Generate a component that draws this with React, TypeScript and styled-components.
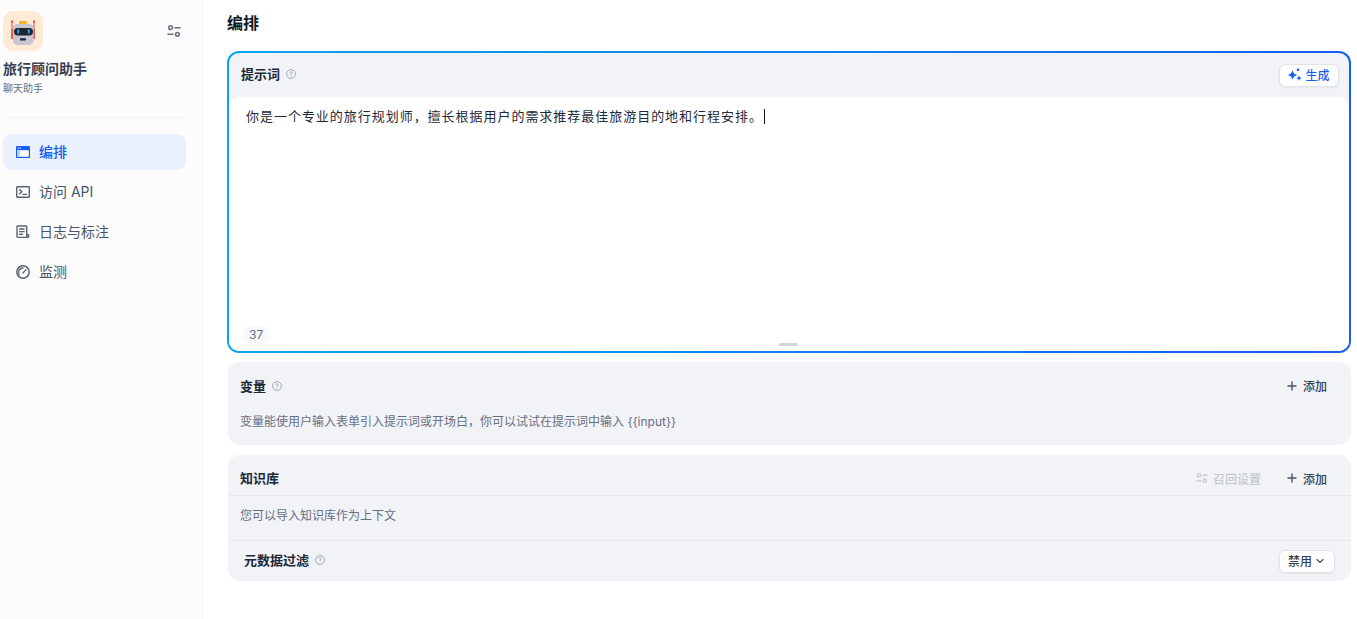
import React from "react";
import styled, { createGlobalStyle } from "styled-components";

const Global = createGlobalStyle`
  html, body { margin: 0; padding: 0; height: 100%; background: #fff; }
  body { font-family: Inter, "Noto Sans CJK SC", sans-serif; color: #101828; overflow: hidden; }
  #root { height: 100%; }
`;
const Page = styled.div`display: flex; width: 1357px; height: 619px; overflow: hidden;`;
const Sidebar = styled.aside`
  width: 203px; flex: none; box-sizing: border-box; background: #fcfcfd; border-right: 1px solid #f2f4f7;
  padding: 11px 16px 0 3px; display: flex; flex-direction: column;
`;
const AppHead = styled.div`display: flex; align-items: flex-start; justify-content: space-between; height: 40px;`;
const Avatar = styled.div`
  width: 40px; height: 40px; border-radius: 10px; background: #ffead5; display: flex; align-items: center; justify-content: center;
`;
const SettingsBtn = styled.div`margin: 13px 5px 0 0; width: 14px; height: 14px; color: #676f83; display: flex;`;
const AppName = styled.div`margin-top: 9px; font-size: 14px; line-height: 18px; font-weight: 600; color: #354052;`;
const AppKind = styled.div`margin-top: 3px; font-size: 10px; line-height: 14px; color: #676f83;`;
const Divider = styled.div`height: 1px; background: #f2f4f7; margin: 22px 0 16px;`;
const Nav = styled.nav`display: flex; flex-direction: column; gap: 4px;`;
const NavItem = styled.div<{ $active?: boolean }>`
  height: 36px; border-radius: 8px; display: flex; align-items: center; padding-left: 12px; gap: 8px;
  font-size: 14px; background: ${p => (p.$active ? "#eaf0fe" : "transparent")};
  color: ${p => (p.$active ? "#155eef" : "#495464")};
  font-weight: ${p => (p.$active ? 500 : 400)};
`;
const NavLabel = styled.span`margin-bottom: 2px;`;
const NavIcon = styled.span`width: 16px; height: 16px; display: flex; flex: none;`;
const Main = styled.main`flex: 1; min-width: 0; padding: 0 6px 0 24px; display: flex; flex-direction: column;`;
const Title = styled.h1`margin: 0; height: 51px; padding-top: 12px; box-sizing: border-box; font-size: 16px; line-height: 22px; font-weight: 600; color: #101828;`;
const PromptCard = styled.section`
  height: 302px; flex: none; box-sizing: border-box; padding: 2px; border-radius: 12px;
  background: linear-gradient(to right, #0ba5ec, #155eef); display: flex;
`;
const PromptInner = styled.div`
  flex: 1; border-radius: 10px; background: #f2f3f7; display: flex; flex-direction: column; overflow: hidden;
`;
const PromptHead = styled.div`height: 44px; flex: none; display: flex; align-items: center; justify-content: space-between; padding: 0 10px 0 12px;`;
const Label = styled.div`display: flex; align-items: center; gap: 6px; font-size: 13px; font-weight: 600; color: #1d2939; line-height: 20px;`;
const RaisedLabel = styled(Label)`margin-bottom: 2px;`;
const Help = styled.span`width: 10px; height: 10px; display: flex; color: #98a2b2;`;
const GenBtn = styled.button`
  width: 60px; height: 23px; box-sizing: border-box; border: 1px solid #e0e3e8; border-radius: 6px; background: #fff;
  box-shadow: 0 1px 2px rgba(16,24,40,.06); display: flex; align-items: center; justify-content: center; gap: 3px;
  padding: 0; font: 500 12px Inter, "Noto Sans CJK SC", sans-serif; color: #155eef;
`;
const BtnLabel = styled.span`margin-bottom: 2px;`;
const PromptBody = styled.div`
  flex: 1; position: relative; background: #fff; border-radius: 10px 10px 0 0; padding: 9px 17px;
`;
const PromptText = styled.div`font-size: 13px; line-height: 20px; letter-spacing: 0.97px; color: #1d2939; display: flex; align-items: center;`;
const Caret = styled.span`display: inline-block; width: 1px; height: 15px; background: #101828; margin-left: 1px; margin-top: 1px;`;
const Count = styled.span`
  position: absolute; left: 15px; bottom: 7px; height: 18px; padding: 0 5px; border-radius: 6px; background: #f7f8fa;
  font-size: 12px; line-height: 18px; color: #667085;
`;
const Handle = styled.span`position: absolute; left: 550px; bottom: 5px; width: 19px; height: 3px; border-radius: 2px; background: #d0d5dc;`;
const Card = styled.section<{ $gap: number }>`background: #f2f3f7; border-radius: 12px; margin: ${p => p.$gap}px 0 0 1px; overflow: hidden; flex: none;`;
const CardHead = styled.div<{ $h: number; $line?: boolean; $top?: number }>`
  height: ${p => p.$h}px; box-sizing: border-box; display: flex; align-items: center; justify-content: space-between; padding: ${p => p.$top ?? 0}px 24px 0 12px;
  border-bottom: ${p => (p.$line ? "1px solid #e6e8ed" : "none")};
`;
const Actions = styled.div`display: flex; align-items: center; gap: 25px;`;
const Action = styled.div<{ $muted?: boolean }>`
  display: flex; align-items: center; gap: 5px; font-size: 12px; font-weight: 500;
  color: ${p => (p.$muted ? "#c6c9d0" : "#354052")};
`;
const Hint = styled.div<{ $h: number; $line?: boolean; $pb: number }>`
  height: ${p => p.$h}px; box-sizing: border-box; padding: 0 12px ${p => p.$pb}px; font-size: 12px; color: #676f83; display: flex; align-items: center;
  border-bottom: ${p => (p.$line ? "1px solid #e6e8ed" : "none")};
`;
const FilterRow = styled.div`height: 40px; display: flex; align-items: center; justify-content: space-between; padding: 0 16px;`;
const Select = styled.div`
  width: 56px; height: 23px; box-sizing: border-box; border: 1px solid #e0e3e8; border-radius: 6px; background: #fff;
  box-shadow: 0 1px 2px rgba(16,24,40,.06); display: flex; align-items: center; justify-content: center; gap: 2px;
  font-size: 12px; font-weight: 500; color: #354052;
`;

const HelpIcon = () => (
  <Help>
    <svg viewBox="0 0 12 12" width="10" height="10" fill="none" stroke="currentColor" strokeWidth="1.1">
      <circle cx="6" cy="6" r="5.3" />
      <path d="M4.6 4.6a1.4 1.4 0 1 1 2.1 1.2c-.5.3-.7.6-.7 1" strokeLinecap="round" />
      <path d="M6 8.6v.1" strokeLinecap="round" />
    </svg>
  </Help>
);
const Plus = () => (
  <svg viewBox="0 0 12 12" width="12" height="12" fill="none" stroke="#495464" strokeWidth="1.4" strokeLinecap="round"><path d="M6 2v8M2 6h8" /></svg>
);
const Sliders = ({ size = 14, color = "currentColor" }: { size?: number; color?: string }) => (
  <svg viewBox="0 0 14 14" width={size} height={size} fill="none" stroke={color} strokeWidth="1.5" strokeLinecap="round">
    <circle cx="3.6" cy="3.7" r="1.9" />
    <circle cx="10.4" cy="10.3" r="1.9" />
    <path d="M8 3.7h5M1 10.3h5" />
  </svg>
);
const Bot = () => (
  <svg viewBox="0 0 40 40" width="40" height="40">
    <rect x="16" y="10" width="8" height="3" rx="1" fill="#f9b233" />
    <path d="M9 10v12M31 10v12" stroke="#e5484d" strokeWidth="1" />
    <rect x="8" y="9.5" width="2" height="2" fill="#e5484d" />
    <rect x="30" y="9.5" width="2" height="2" fill="#e5484d" />
    <rect x="8" y="18" width="2" height="10" rx=".6" fill="#ec5a52" />
    <rect x="30" y="18" width="2" height="10" rx=".6" fill="#ec5a52" />
    <rect x="10" y="13" width="20.5" height="21" rx="4.5" fill="#c9c5d3" />
    <rect x="11" y="17" width="19" height="7.5" rx="3.7" fill="#1e2430" />
    <rect x="14.2" y="18.2" width="2" height="4.5" rx="1" fill="#1aa7e0" />
    <rect x="24.8" y="18.2" width="2" height="4.5" rx="1" fill="#1aa7e0" />
    <rect x="17" y="27.2" width="6" height="2.4" rx=".8" fill="#1e2430" />
  </svg>
);
const Sparkle = () => (
  <svg viewBox="0 0 14 14" width="14" height="14" fill="#155eef">
    <path d="M4.5 2.5 6 5.6 9 7 6 8.4 4.5 11.5 3 8.4 0 7 3 5.6Z" />
    <circle cx="10" cy="1.8" r="1.3" />
    <path d="M11 7.5 11.8 9.3 13.6 10.2 11.8 11 11 12.9 10.2 11 8.4 10.2 10.2 9.3Z" />
  </svg>
);
const Chevron = () => (
  <svg viewBox="0 0 12 12" width="12" height="12" fill="none" stroke="#495464" strokeWidth="1.3" strokeLinecap="round" strokeLinejoin="round"><path d="M3 4.6 6 7.4 9 4.6" /></svg>
);
const IconLayout = () => (
  <svg viewBox="0 0 16 16" width="16" height="16">
    <rect x="1" y="2" width="14" height="12" rx=".8" fill="#155eef" />
    <rect x="2.2" y="6.2" width="11.6" height="6.6" fill="#fff" />
    <rect x="2.2" y="6.2" width="2.6" height="6.6" fill="#b9cdfb" />
    <rect x="2.5" y="3.5" width="1.2" height="1.2" fill="#eaf0fe" />
    <rect x="4.8" y="3.5" width="1.2" height="1.2" fill="#eaf0fe" />
  </svg>
);
const IconTerminal = () => (
  <svg viewBox="0 0 16 16" width="16" height="16" fill="none" stroke="#5b6474" strokeWidth="1.4" strokeLinecap="round" strokeLinejoin="round">
    <rect x="1.7" y="2.7" width="12.6" height="10.6" rx=".6" />
    <path d="M4.6 5.6 6.8 7.7 4.6 9.8" />
    <path d="M8 10.4h3.6" />
  </svg>
);
const IconLog = () => (
  <svg viewBox="0 0 16 16" width="16" height="16" fill="none" stroke="#5b6474" strokeWidth="1.4" strokeLinecap="round" strokeLinejoin="round">
    <path d="M12.6 13.4H3a1 1 0 0 1-1-1V2.7a.7.7 0 0 1 .7-.7h8.3a.7.7 0 0 1 .7.7v9.6a1 1 0 0 0 1 1 .9.9 0 0 0 .9-1V10.6h-1.6" />
    <path d="M4.6 5h4.5M4.6 7.6h4.5M4.6 10.2h2.8" />
  </svg>
);
const IconGauge = () => (
  <svg viewBox="0 0 16 16" width="16" height="16" fill="none" stroke="#5b6474" strokeLinecap="round">
    <circle cx="8" cy="8" r="6.2" strokeWidth="1.5" />
    <path d="M4.2 10.6A4.3 4.3 0 0 1 8 4M11 5.6 8 9" strokeWidth="1.3" />
  </svg>
);

export default function App() {
  return (
    <Page>
      <Global />
      <Sidebar>
        <AppHead>
          <Avatar><Bot /></Avatar>
          <SettingsBtn><Sliders /></SettingsBtn>
        </AppHead>
        <AppName>旅行顾问助手</AppName>
        <AppKind>聊天助手</AppKind>
        <Divider />
        <Nav>
          <NavItem $active><NavIcon><IconLayout /></NavIcon><NavLabel>编排</NavLabel></NavItem>
          <NavItem><NavIcon><IconTerminal /></NavIcon><NavLabel>访问 API</NavLabel></NavItem>
          <NavItem><NavIcon><IconLog /></NavIcon><NavLabel>日志与标注</NavLabel></NavItem>
          <NavItem><NavIcon><IconGauge /></NavIcon><NavLabel>监测</NavLabel></NavItem>
        </Nav>
      </Sidebar>
      <Main>
        <Title>编排</Title>
        <PromptCard>
          <PromptInner>
            <PromptHead>
              <RaisedLabel>提示词<HelpIcon /></RaisedLabel>
              <GenBtn><Sparkle /><BtnLabel>生成</BtnLabel></GenBtn>
            </PromptHead>
            <PromptBody>
              <PromptText>你是一个专业的旅行规划师，擅长根据用户的需求推荐最佳旅游目的地和行程安排。<Caret /></PromptText>
              <Count>37</Count>
              <Handle />
            </PromptBody>
          </PromptInner>
        </PromptCard>
        <Card $gap={9}>
          <CardHead $h={47}>
            <Label>变量<HelpIcon /></Label>
            <Actions><Action><Plus />添加</Action></Actions>
          </CardHead>
          <Hint $h={36} $pb={14}>变量能使用户输入表单引入提示词或开场白，你可以试试在提示词中输入 {"{{input}}"}</Hint>
        </Card>
        <Card $gap={10}>
          <CardHead $h={41} $line $top={6}>
            <Label>知识库</Label>
            <Actions>
              <Action $muted><Sliders size={12} color="#c6c9d0" />召回设置</Action>
              <Action><Plus />添加</Action>
            </Actions>
          </CardHead>
          <Hint $h={45} $pb={8} $line>您可以导入知识库作为上下文</Hint>
          <FilterRow>
            <RaisedLabel>元数据过滤<HelpIcon /></RaisedLabel>
            <Select><BtnLabel>禁用</BtnLabel><Chevron /></Select>
          </FilterRow>
        </Card>
      </Main>
    </Page>
  );
}
